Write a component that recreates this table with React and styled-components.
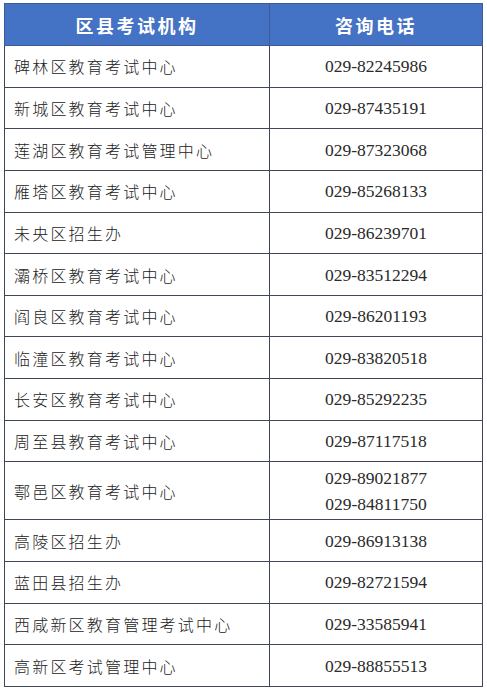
import React from "react";
import styled, { createGlobalStyle } from "styled-components";

const GlobalStyle = createGlobalStyle`
  html, body {
    margin: 0;
    padding: 0;
    background: #ffffff;
  }
`;

const rows = [
  { name: "碑林区教育考试中心", phones: ["029-82245986"] },
  { name: "新城区教育考试中心", phones: ["029-87435191"] },
  { name: "莲湖区教育考试管理中心", phones: ["029-87323068"] },
  { name: "雁塔区教育考试中心", phones: ["029-85268133"] },
  { name: "未央区招生办", phones: ["029-86239701"] },
  { name: "灞桥区教育考试中心", phones: ["029-83512294"] },
  { name: "阎良区教育考试中心", phones: ["029-86201193"] },
  { name: "临潼区教育考试中心", phones: ["029-83820518"] },
  { name: "长安区教育考试中心", phones: ["029-85292235"] },
  { name: "周至县教育考试中心", phones: ["029-87117518"] },
  { name: "鄠邑区教育考试中心", phones: ["029-89021877", "029-84811750"] },
  { name: "高陵区招生办", phones: ["029-86913138"] },
  { name: "蓝田县招生办", phones: ["029-82721594"] },
  { name: "西咸新区教育管理考试中心", phones: ["029-33585941"] },
  { name: "高新区考试管理中心", phones: ["029-88855513"] },
];

const App = () => {
  return (
    <>
      <GlobalStyle />
      <Page>
        <Table>
          <colgroup>
            <col style={{ width: 265 }} />
            <col style={{ width: 213 }} />
          </colgroup>
          <thead>
            <HeadRow>
              <HeadCell>区县考试机构</HeadCell>
              <HeadCell>咨询电话</HeadCell>
            </HeadRow>
          </thead>
          <tbody>
            {rows.map((r) => (
              <Row key={r.name} $tall={r.phones.length > 1}>
                <NameCell>{r.name}</NameCell>
                <PhoneCell>
                  {r.phones.map((p) => (
                    <Phone key={p}>{p}</Phone>
                  ))}
                </PhoneCell>
              </Row>
            ))}
          </tbody>
        </Table>
      </Page>
    </>
  );
};

// styles
const Page = styled.div`
  width: 487px;
  height: 690px;
  padding: 3px 0 0 4px;
  box-sizing: border-box;
  background: #ffffff;
`;

const Table = styled.table`
  width: 478px;
  border-collapse: collapse;
  table-layout: fixed;
`;

const HeadRow = styled.tr`
  height: 42px;
  background: #4472c4;
`;

const HeadCell = styled.th`
  border: 1px solid #3d5a94;
  color: #ffffff;
  font-family: "Noto Sans CJK SC", sans-serif;
  font-size: 18px;
  font-weight: 700;
  letter-spacing: 2.5px;
  text-align: center;
  padding: 0;
  &:last-child {
    border-left-color: #2e3f63;
  }
`;

const Row = styled.tr`
  height: ${(p) => (p.$tall ? "58px" : "41.65px")};
`;

const NameCell = styled.td`
  border: 1px solid #3f4656;
  padding: 0 0 0 9px;
  font-family: "Noto Sans CJK SC", sans-serif;
  font-size: 16px;
  font-weight: 300;
  letter-spacing: 2.2px;
  color: #222222;
  white-space: nowrap;
`;

const PhoneCell = styled.td`
  border: 1px solid #3f4656;
  padding: 0;
  text-align: center;
`;

const Phone = styled.div`
  font-family: "Liberation Serif", "Times New Roman", serif;
  font-size: 17.5px;
  color: #2a2a2a;
  line-height: 26px;
`;

export default App;
